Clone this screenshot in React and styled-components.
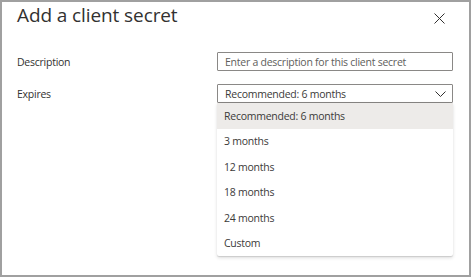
import React from "react";
import styled, { createGlobalStyle } from "styled-components";

const Global = createGlobalStyle`
  html, body { margin: 0; padding: 0; background: #ffffff; }
  * { box-sizing: border-box; }
`;

const Panel = styled.div`
  width: 471px;
  height: 277px;
  border: 2px solid #a0a0a0;
  background: #ffffff;
  font-family: "Open Sans", "Noto Sans", sans-serif;
  color: #323130;
  display: flex;
  flex-direction: column;
  padding: 0 16px 0 15px;
`;

const Header = styled.div`
  display: flex;
  align-items: flex-start;
  justify-content: space-between;
  height: 40px;
`;

const Title = styled.h1`
  margin: 0;
  font-size: 19px;
  font-weight: 400;
  line-height: 26px;
  letter-spacing: -0.1px;
  color: #323130;
`;

const CloseButton = styled.button`
  border: none;
  background: transparent;
  padding: 0;
  margin: 9px 7px 0 0;
  width: 14px;
  height: 14px;
  display: flex;
  align-items: center;
  justify-content: center;
  color: #323130;
`;

const Form = styled.div`
  display: flex;
  flex-direction: column;
  gap: 13px;
  padding-top: 10px;
`;

const Row = styled.div`
  display: grid;
  grid-template-columns: 200px 236px;
  align-items: center;
  position: relative;
`;

const Label = styled.label`
  font-size: 10.5px;
  letter-spacing: -0.25px;
  color: #323130;
`;

const TextInput = styled.div`
  height: 19px;
  border: 1px solid #8a8886;
  border-radius: 1px;
  padding: 0 7px;
  display: flex;
  align-items: center;
  font-size: 10.5px;
  letter-spacing: -0.25px;
  color: #605e5c;
`;

const Select = styled(TextInput)`
  justify-content: space-between;
  color: #3b3a39;
  padding-right: 6px;
`;

const Menu = styled.div`
  position: absolute;
  left: 200px;
  top: 19px;
  width: 236px;
  background: #ffffff;
  border-radius: 2px;
  box-shadow: 0 1.6px 3.6px rgba(0, 0, 0, 0.13), 0 0.3px 0.9px rgba(0, 0, 0, 0.11);
  display: flex;
  flex-direction: column;
`;

const Option = styled.div`
  height: 25.5px;
  display: flex;
  align-items: center;
  padding: 0 7px;
  font-size: 10.5px;
  letter-spacing: -0.25px;
  color: #3b3a39;
  background: ${(p) => (p.$selected ? "#edebe9" : "transparent")};
`;

const options = [
  "Recommended: 6 months",
  "3 months",
  "12 months",
  "18 months",
  "24 months",
  "Custom",
];

export default function App() {
  return (
    <>
      <Global />
      <Panel>
        <Header>
          <Title>Add a client secret</Title>
          <CloseButton aria-label="Close">
            <svg width="11" height="11" viewBox="0 0 11 11">
              <path d="M0.5 0.5 L10.5 10.5 M10.5 0.5 L0.5 10.5" stroke="#323130" strokeWidth="1" fill="none" />
            </svg>
          </CloseButton>
        </Header>
        <Form>
          <Row>
            <Label>Description</Label>
            <TextInput>Enter a description for this client secret</TextInput>
          </Row>
          <Row>
            <Label>Expires</Label>
            <Select>
              <span>Recommended: 6 months</span>
              <svg width="11" height="6" viewBox="0 0 11 6">
                <path d="M0.5 0.5 L5.5 5.5 L10.5 0.5" stroke="#323130" strokeWidth="1" fill="none" />
              </svg>
            </Select>
            <Menu>
              {options.map((o, i) => (
                <Option key={o} $selected={i === 0}>
                  {o}
                </Option>
              ))}
            </Menu>
          </Row>
        </Form>
      </Panel>
    </>
  );
}
